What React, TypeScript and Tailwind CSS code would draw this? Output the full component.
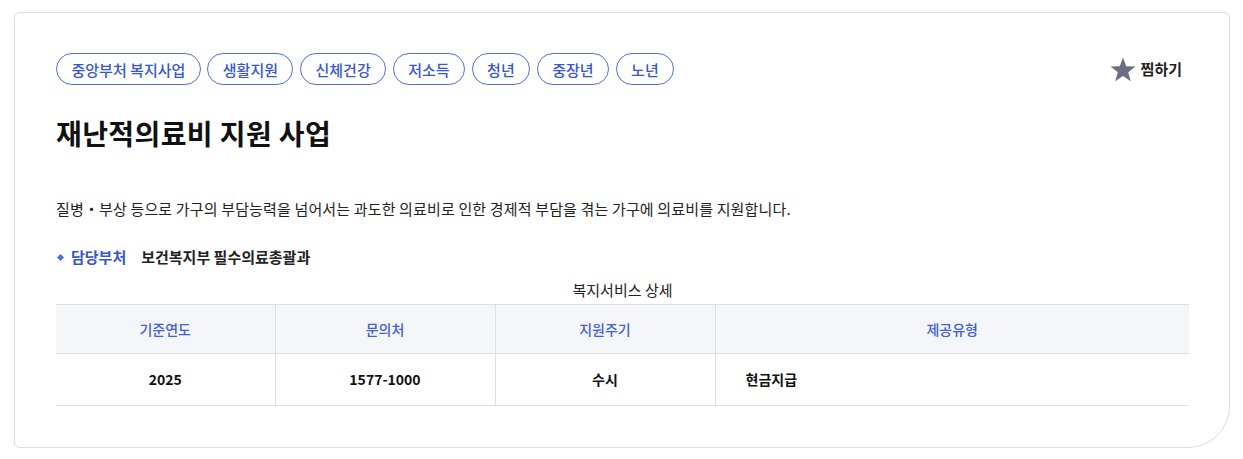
const TAGS = ['중앙부처 복지사업', '생활지원', '신체건강', '저소득', '청년', '중장년', '노년'];

const FONT = { fontFamily: '"Noto Sans CJK KR", "Noto Sans", sans-serif' };

export default function App() {
  return (
    <div className="w-full min-h-screen bg-white pt-3 pl-[14px] pr-[13px]" style={FONT}>
      <div className="border border-[#dcdcdc] rounded-tl-[6px] rounded-tr-[6px] rounded-bl-[6px] rounded-br-[42px] pt-[40px] pl-[41px] pr-[40px] pb-[41px]">
        <div className="flex items-center justify-between">
          <div className="flex gap-[6.5px]">
            {TAGS.map(t => (
              <span key={t} className="h-8 px-[14.5px] flex items-center rounded-full border border-[#4e6fe0] text-[#3756d6] text-[15px] font-medium leading-none">{t}</span>
            ))}
          </div>
          <button className="flex items-center gap-[5px] text-[15px] font-bold text-[#222] mr-[7px]">
            <svg width="26" height="25" viewBox="0 0 26 25">
              <polygon points="13,0.5 16.2,9.2 25.5,9.5 18.2,15.3 20.8,24.3 13,19 5.2,24.3 7.8,15.3 0.5,9.5 9.8,9.2" fill="#6c6f82" />
            </svg>
            찜하기
          </button>
        </div>

        <h1 className="mt-[28px] text-[28px] leading-[40px] font-bold text-[#111] tracking-[0.4px]">재난적의료비 지원 사업</h1>

        <p className="mt-[44px] text-[15px] leading-[24px] text-[#222] tracking-[0.15px]">질병・부상 등으로 가구의 부담능력을 넘어서는 과도한 의료비로 인한 경제적 부담을 겪는 가구에 의료비를 지원합니다.</p>

        <div className="mt-[24px] flex items-center text-[15px] leading-[24px]">
          <span className="w-[5px] h-[5px] bg-[#4e6fe0] rotate-45 ml-[2px] mr-[8px]" />
          <span className="font-bold text-[#3756d6]">담당부처</span>
          <span className="ml-[15px] font-bold text-[#222]">보건복지부 필수의료총괄과</span>
        </div>

        <table className="mt-[11px] w-full border-collapse text-[14px] table-fixed">
          <caption className="text-[15px] leading-[20px] text-[#222] pb-[4px]">복지서비스 상세</caption>
          <colgroup>
            <col className="w-[219px]" />
            <col className="w-[220px]" />
            <col className="w-[220px]" />
            <col />
          </colgroup>
          <thead>
            <tr className="bg-[#f5f6fa] border-t border-b border-[#dedfe3] h-[49px]">
              <th className="font-medium text-[#3f5fe0] border-r border-[#dedfe3]">기준연도</th>
              <th className="font-medium text-[#3f5fe0] border-r border-[#dedfe3]">문의처</th>
              <th className="font-medium text-[#3f5fe0] border-r border-[#dedfe3]">지원주기</th>
              <th className="font-medium text-[#3f5fe0]">제공유형</th>
            </tr>
          </thead>
          <tbody>
            <tr className="border-b border-[#dedfe3] h-[52px]">
              <td className="text-center font-bold text-[#111] border-r border-[#dedfe3]">2025</td>
              <td className="text-center font-bold text-[#111] border-r border-[#dedfe3]">1577-1000</td>
              <td className="text-center font-bold text-[#111] border-r border-[#dedfe3]">수시</td>
              <td className="pl-[30px] font-bold text-[#111]">현금지급</td>
            </tr>
          </tbody>
        </table>
      </div>
    </div>
  );
}
